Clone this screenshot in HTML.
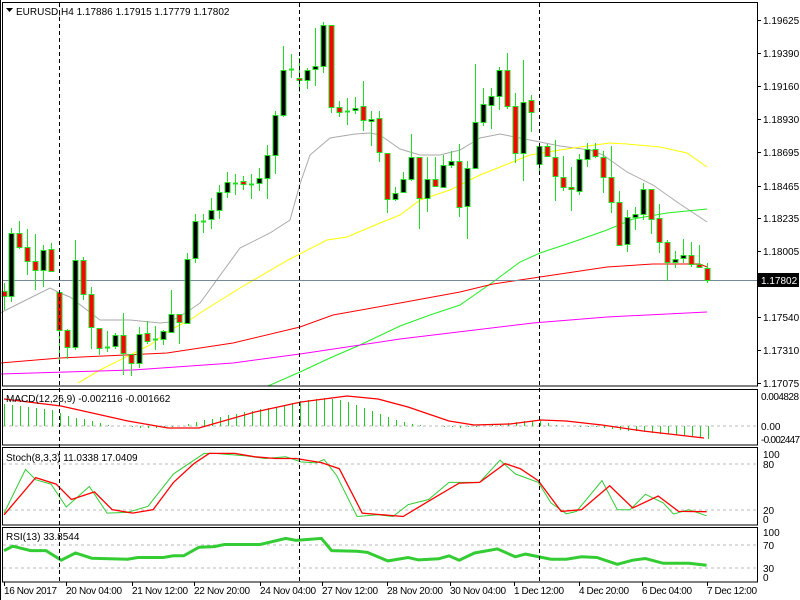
<!DOCTYPE html>
<html><head><meta charset="utf-8"><style>
html,body{margin:0;padding:0;background:#fff;}
svg{display:block;font-family:"Liberation Sans",sans-serif;font-size:10px;}
</style></head><body>
<svg id="s" width="800" height="600" viewBox="0 0 800 600" xmlns="http://www.w3.org/2000/svg">
<rect x="0" y="0" width="800" height="600" fill="#fff"/>
<g id="g"></g>
<g fill="#000">
<text x="16" y="15">EURUSD,H4  1.17886 1.17915 1.17779 1.17802</text>
<text x="6" y="402">MACD(12,26,9) -0.002116 -0.001662</text>
<text x="6" y="461">Stoch(8,3,3) 11.0338 17.0409</text>
<text x="6" y="540">RSI(13) 33.8544</text>
<text x="763" y="24">1.19625</text>
<text x="763" y="57">1.19390</text>
<text x="763" y="90">1.19160</text>
<text x="763" y="123">1.18930</text>
<text x="763" y="156">1.18695</text>
<text x="763" y="190">1.18465</text>
<text x="763" y="222">1.18235</text>
<text x="763" y="255">1.18005</text>
<text x="763" y="321">1.17540</text>
<text x="763" y="354">1.17310</text>
<text x="763" y="387">1.17075</text>
<text x="761" y="400" textLength="38">0.004828</text>
<text x="761" y="430">0.00</text>
<text x="761" y="443" textLength="39">-0.002447</text>
<text x="763" y="458">100</text>
<text x="763" y="468">80</text>
<text x="763" y="514">20</text>
<text x="763" y="523">0</text>
<text x="763" y="536">100</text>
<text x="763" y="549">70</text>
<text x="763" y="572">30</text>
<text x="763" y="581">0</text>
<g textLength="54">
<text x="4" y="594" textLength="53">16 Nov 2017</text>
<text x="66" y="594" textLength="56">20 Nov 04:00</text>
<text x="132" y="594" textLength="56">21 Nov 12:00</text>
<text x="194" y="594" textLength="56">22 Nov 20:00</text>
<text x="260" y="594" textLength="56">24 Nov 04:00</text>
<text x="322" y="594" textLength="56">27 Nov 12:00</text>
<text x="387" y="594" textLength="56">28 Nov 20:00</text>
<text x="450" y="594" textLength="56">30 Nov 04:00</text>
<text x="514" y="594" textLength="50">1 Dec 12:00</text>
<text x="579" y="594" textLength="50">4 Dec 20:00</text>
<text x="642" y="594" textLength="50">6 Dec 04:00</text>
<text x="707" y="594" textLength="50">7 Dec 12:00</text>
</g>
</g>
<rect x="758" y="273" width="41" height="14" fill="#000"/>
<text x="761" y="284" fill="#fff">1.17802</text>
<path d="M6 8 L13 8 L9.5 12 Z" fill="#000"/>
</svg>
<script>
var g=document.getElementById('g'),h='';
function L(pts,c,w,extra){h+='<polyline fill="none" stroke="'+c+'" stroke-width="'+(w||1)+'" '+(extra||'')+' points="'+pts+'"/>';}
function P(a,sx,sy,ox,oy){var r=[];for(var i=0;i<a.length;i+=2)r.push((ox+a[i]/sx).toFixed(1)+','+(oy+a[i+1]/sy).toFixed(1));return r.join(' ');}
h+='<g stroke="#bbb" stroke-dasharray="3,3">';
[426,464,510,545,568].forEach(function(y){h+='<line x1="3" x2="757" y1="'+y+'" y2="'+y+'"/>';});
h+='</g>';
L('0,313 20,303 50,288 60,293 70,297 100,320 130,320 160,323 170,322 190,310 200,303 240,248 270,233 290,220 300,184 310,155 330,138 355,134 370,133 380,135 400,149 420,155 440,155 460,150 480,138 500,134 520,138 540,142 560,146 590,150 603,155 627,172 653,185 677,202 707,222','#aaa');
L('78,383 100,370 130,355 150,345 170,330 190,320 200,313 240,288 288,260 327,240 347,237 380,223 400,215 420,200 450,190 480,175 510,163 530,155 560,150 580,147 610,143 627,144 660,147 687,153 707,167','#ffff00');
L('268,386 300,372 330,358 360,345 400,326 430,315 460,305 493,282 520,262 540,253 573,242 607,230 633,219 667,213 707,209','#22ee22');
L('0,363 60,358 167,353 233,343 300,327 333,315 400,303 460,292 493,284 540,277 607,267 653,264 700,264 707,267','#ff0000');
L('0,374 133,370 233,363 300,354 400,339 533,323 607,317 687,313 707,312','#ff00ff');
h+='<line x1="3" x2="757" y1="280.5" y2="280.5" stroke="#778899"/>';
var C=[[4,291,296,283,310,'r'],[11,233,296,228,302,'b'],[19,233,247,221,249,'r'],[27,247,261,229,275,'r'],[35,261,270,234,290,'r'],[43,250,270,245,287,'b'],[51,249,271,243,271,'r'],[59,292,330,292,364,'r'],[67,330,347,329,359,'r'],[75,260,347,240,350,'b'],[83,260,294,257,300,'r'],[91,294,327,287,349,'r'],[99,328,348,328,355,'r'],[107,347,347,331,352,'d'],[115,335,346,333,349,'b'],[123,335,353,313,375,'r'],[131,354,363,354,376,'r'],[139,334,363,327,368,'b'],[147,333,341,321,344,'r'],[155,339,339,326,350,'d'],[163,331,339,330,345,'b'],[171,314,332,290,333,'b'],[179,314,322,314,344,'r'],[187,259,323,253,324,'b'],[195,221,258,214,263,'b'],[203,221,221,214,233,'d'],[211,210,219,198,229,'b'],[219,192,210,185,219,'b'],[227,182,192,172,198,'b'],[235,183,183,174,195,'d'],[243,181,184,176,190,'r'],[251,184,184,174,199,'d'],[259,178,183,168,191,'b'],[267,155,178,145,199,'b'],[275,115,155,111,174,'b'],[283,70,115,46,117,'b'],[291,69,69,54,78,'d'],[299,78,80,58,92,'r'],[307,70,80,68,89,'b'],[315,66,69,28,86,'b'],[323,25,66,22,73,'b'],[331,25,107,25,113,'r'],[339,107,112,101,117,'r'],[347,111,111,98,125,'d'],[355,108,110,97,114,'b'],[363,106,120,81,131,'r'],[371,119,121,111,146,'b'],[379,118,152,111,162,'r'],[387,153,199,153,213,'r'],[395,193,199,187,201,'b'],[403,179,192,172,193,'b'],[411,157,179,134,181,'b'],[419,157,198,157,229,'r'],[427,179,198,157,212,'b'],[435,179,186,157,187,'r'],[443,165,187,155,187,'b'],[451,161,165,151,168,'b'],[459,161,207,144,217,'r'],[467,168,206,161,239,'b'],[475,122,168,64,168,'b'],[483,104,122,88,126,'b'],[491,96,105,88,129,'b'],[499,70,96,67,110,'b'],[507,70,106,53,109,'r'],[515,106,153,93,163,'r'],[523,102,153,60,181,'b'],[531,100,112,95,132,'r'],[539,146,164,146,172,'b'],[547,146,156,144,157,'r'],[555,157,176,140,201,'r'],[563,177,187,156,191,'r'],[571,187,189,167,211,'r'],[579,159,191,154,195,'b'],[587,149,159,143,167,'b'],[595,149,156,143,158,'r'],[603,157,177,151,193,'r'],[611,177,202,146,213,'r'],[619,202,245,191,245,'r'],[627,217,244,210,252,'b'],[635,214,217,207,230,'b'],[643,189,214,183,220,'b'],[651,189,219,189,234,'r'],[659,218,242,204,253,'r'],[667,242,262,240,281,'r'],[675,259,262,251,268,'b'],[683,255,258,239,263,'b'],[691,255,264,242,267,'r'],[699,264,267,245,267,'r'],[707,268,280,263,283,'r']];
var gr='#22dd22';
C.forEach(function(c){var x=c[0];
h+='<line x1="'+(x+.5)+'" x2="'+(x+.5)+'" y1="'+c[3]+'" y2="'+c[4]+'" stroke="'+gr+'"/>';
if(c[5]=='d'){h+='<line x1="'+(x-2)+'" x2="'+(x+3)+'" y1="'+(c[1]+.5)+'" y2="'+(c[1]+.5)+'" stroke="'+gr+'" stroke-width="2"/>';}
else{h+='<rect x="'+(x-2)+'" y="'+(c[1]+.5)+'" width="5" height="'+Math.max(c[2]-c[1],2)+'" fill="'+(c[5]=='r'?'#ff0000':'#000')+'" stroke="'+gr+'"/>';}
});
var M=[404,405,406,407,408,409,410,413,416,418,419,421,423,425,426,426,427,428,428,428,427,427,426,424,422,420,419,417,415,414,412,411,409,408,407,405,403,401,400,399,398,399,400,402,405,408,411,414,417,420,422,424,425,426,426,427,427,428,427,427,426,425,424,423,422,421,421,421,423,425,426,426,427,427,427,428,429,430,431,431,432,433,434,434,435,436,436,437,439];
M.forEach(function(v,i){var x=4+i*8+.5;h+='<line x1="'+x+'" x2="'+x+'" y1="426" y2="'+v+'" stroke="#22cc22"/>';});
L('4,399 61,406 128,421 168,428 199,428 255,412 301,402 347,396 378,399 408,407 449,421 474,425 510,424 541,420 566,421 602,425 643,431 704,438','#ff0000',1.3);
L(P([8,390,50,262,70,292,100,305,130,372,175,312,210,390,250,388,290,370,340,275,400,215,420,215,480,222,520,230,560,225,590,240,620,243,635,233,660,280,700,400,740,395,770,400,800,365,840,350,880,300,940,300,980,235,1010,275,1055,300,1080,360,1110,392,1130,385,1180,295,1210,380,1235,380,1265,335,1300,360,1320,393,1350,380,1385,398],1.96,2.93,0,380),'#33cc33');
L(P([8,395,70,286,110,305,140,350,185,328,220,380,260,390,300,380,340,300,380,245,410,215,460,215,500,225,540,230,580,230,630,242,665,260,710,390,750,395,790,400,840,355,900,302,940,300,990,245,1020,260,1055,295,1100,385,1140,380,1195,310,1240,375,1290,340,1330,385,1385,386],1.96,2.93,0,380),'#ff0000',1.3);
L(P([8,500,25,487,60,500,90,500,120,528,148,507,180,522,250,525,270,520,320,520,340,515,360,515,390,490,420,488,440,482,510,482,560,464,580,470,630,464,650,500,700,502,720,505,760,530,800,520,820,527,860,524,880,515,900,528,930,507,975,495,1010,518,1030,510,1080,525,1110,525,1140,518,1170,520,1210,540,1240,528,1265,523,1300,537,1350,537,1385,543],1.96,2.93,0,380),'#33cc33',3);
[59,299,539].forEach(function(x){h+='<line x1="'+(x+.5)+'" x2="'+(x+.5)+'" y1="3" y2="582" stroke="#000" stroke-dasharray="4,3"/>';});
h+='<g fill="none" stroke="#000">';
[[2.5,2.5,386],[2.5,389.5,445],[2.5,447.5,525],[2.5,527.5,582]].forEach(function(p){h+='<rect x="'+p[0]+'" y="'+p[1]+'" width="755" height="'+(p[2]-p[1])+'"/>';});
h+='<line x1="0.5" x2="0.5" y1="0" y2="600"/>';
[20,53,86,119,152,186,218,251,317,350,383].forEach(function(y){h+='<line x1="758" x2="761" y1="'+(y+.5)+'" y2="'+(y+.5)+'"/>';});
[4,66,132,194,260,322,387,450,514,579,642,707].forEach(function(x){h+='<line x1="'+(x+.5)+'" x2="'+(x+.5)+'" y1="582" y2="586"/>';});
h+='</g>';
g.innerHTML=h;
</script>
</body></html>
